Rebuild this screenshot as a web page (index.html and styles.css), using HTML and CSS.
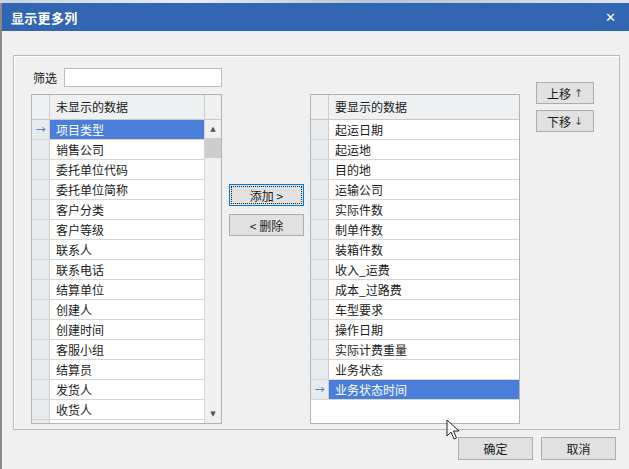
FILE: index.html
```html
<!DOCTYPE html>
<html lang="zh">
<head>
<meta charset="utf-8">
<link rel="stylesheet" href="styles.css">
</head>
<body>
<div class="screen">
  <div class="topstrip"></div>
  <div class="dialog">
    <div class="titlebar">
      <span class="title">显示更多列</span>
      <span class="close">✕</span>
    </div>
    <div class="body">
      <div class="panel">
        <div class="leftcol">
          <div class="filter">
            <span class="filter-label">筛选</span>
            <span class="filter-input"></span>
          </div>
          <div class="grid grid-left">
            <div class="ghead">
              <span class="ind"></span>
              <span class="gtitle">未显示的数据</span>
              <span class="sbhead"></span>
            </div>
            <div class="gbody">
              <div class="rows">
                <div class="row sel"><span class="ind">→</span><span class="cell">项目类型</span></div>
                <div class="row"><span class="ind"></span><span class="cell">销售公司</span></div>
                <div class="row"><span class="ind"></span><span class="cell">委托单位代码</span></div>
                <div class="row"><span class="ind"></span><span class="cell">委托单位简称</span></div>
                <div class="row"><span class="ind"></span><span class="cell">客户分类</span></div>
                <div class="row"><span class="ind"></span><span class="cell">客户等级</span></div>
                <div class="row"><span class="ind"></span><span class="cell">联系人</span></div>
                <div class="row"><span class="ind"></span><span class="cell">联系电话</span></div>
                <div class="row"><span class="ind"></span><span class="cell">结算单位</span></div>
                <div class="row"><span class="ind"></span><span class="cell">创建人</span></div>
                <div class="row"><span class="ind"></span><span class="cell">创建时间</span></div>
                <div class="row"><span class="ind"></span><span class="cell">客服小组</span></div>
                <div class="row"><span class="ind"></span><span class="cell">结算员</span></div>
                <div class="row"><span class="ind"></span><span class="cell">发货人</span></div>
                <div class="row"><span class="ind"></span><span class="cell">收货人</span></div>
                <div class="row"><span class="ind"></span><span class="cell"></span></div>
              </div>
              <div class="scrollbar">
                <span class="sb-up">▲</span>
                <span class="sb-thumb"></span>
                <span class="sb-track"></span>
                <span class="sb-down">▼</span>
              </div>
            </div>
          </div>
        </div>
        <div class="midcol">
          <div class="btn btn-mid focus"><span class="focusring">添加 &gt;</span></div>
          <div class="btn btn-mid">&lt; 删除</div>
        </div>
        <div class="grid grid-right">
          <div class="ghead">
            <span class="ind"></span>
            <span class="gtitle">要显示的数据</span>
          </div>
          <div class="rows">
            <div class="row"><span class="ind"></span><span class="cell">起运日期</span></div>
            <div class="row"><span class="ind"></span><span class="cell">起运地</span></div>
            <div class="row"><span class="ind"></span><span class="cell">目的地</span></div>
            <div class="row"><span class="ind"></span><span class="cell">运输公司</span></div>
            <div class="row"><span class="ind"></span><span class="cell">实际件数</span></div>
            <div class="row"><span class="ind"></span><span class="cell">制单件数</span></div>
            <div class="row"><span class="ind"></span><span class="cell">装箱件数</span></div>
            <div class="row"><span class="ind"></span><span class="cell">收入_运费</span></div>
            <div class="row"><span class="ind"></span><span class="cell">成本_过路费</span></div>
            <div class="row"><span class="ind"></span><span class="cell">车型要求</span></div>
            <div class="row"><span class="ind"></span><span class="cell">操作日期</span></div>
            <div class="row"><span class="ind"></span><span class="cell">实际计费重量</span></div>
            <div class="row"><span class="ind"></span><span class="cell">业务状态</span></div>
            <div class="row sel last"><span class="ind">→</span><span class="cell">业务状态时间</span></div>
          </div>
        </div>
        <div class="rightcol">
          <div class="btn btn-move">上移 <span class="arr">↑</span></div>
          <div class="btn btn-move">下移 <span class="arr">↓</span></div>
        </div>
      </div>
      <div class="footer">
        <div class="btn btn-foot">确定</div>
        <div class="btn btn-foot">取消</div>
      </div>
    </div>
  </div>
  <svg class="cursor" width="14" height="22" viewBox="0 0 14 22">
    <path d="M1 1 L1 17 L5 13 L8 20 L10.5 19 L7.5 12 L13 12 Z" fill="#fff" stroke="#222" stroke-width="1" stroke-linejoin="round"/>
  </svg>
</div>
</body>
</html>
```
FILE: styles.css
```css
* { box-sizing: border-box; }
html, body { margin: 0; padding: 0; }
body {
  width: 629px;
  height: 469px;
  overflow: hidden;
  background: #f0f0f0;
  font-family: "Noto Sans CJK SC", "Noto Sans", sans-serif;
  font-size: 12px;
  color: #1a1a1a;
}
.screen {
  position: relative;
  width: 629px;
  height: 469px;
  background: #8a8a8a;
}
.topstrip {
  height: 3px;
  background: linear-gradient(90deg, #c8d2e0, #e8ecf2 30%, #b8c4d8 60%, #dfe4ec);
}
.dialog {
  margin-left: 2px;
  height: 466px;
  background: #f0f0f0;
  display: flex;
  flex-direction: column;
}
.titlebar {
  height: 28px;
  background: #3265b2;
  display: flex;
  align-items: center;
  justify-content: space-between;
  padding: 0 13px 0 9px;
  color: #fff;
}
.title {
  font-weight: bold;
  font-size: 13px;
  letter-spacing: 0.3px;
}
.close {
  font-size: 13px;
  font-family: "DejaVu Sans", sans-serif;
}
.body {
  flex: 1;
  padding: 24px 9px 0 11px;
  display: flex;
  flex-direction: column;
}
.panel {
  height: 375px;
  border: 1px solid #b9b9b9;
  box-shadow: 1px 1px 0 #fff inset;
  display: flex;
  padding: 12px 0 0 17px;
}
.leftcol {
  width: 191px;
  display: flex;
  flex-direction: column;
}
.filter {
  display: flex;
  align-items: center;
  height: 19px;
  margin-bottom: 7px;
}
.filter-label {
  width: 33px;
  padding-left: 2px;
  line-height: 19px;
}
.filter-input {
  width: 158px;
  height: 19px;
  background: #fff;
  border: 1px solid #bcbcbc;
}
.grid {
  height: 330px;
  background: #fff;
  border: 1px solid #b4b4b4;
  display: flex;
  flex-direction: column;
}
.ghead {
  height: 25px;
  display: flex;
  background: #eef0f2;
  border-bottom: 1px solid #c9c9c9;
  flex: none;
}
.ind {
  width: 18px;
  flex: none;
  background: #e8ebee;
  border-right: 1px solid #cdcdcd;
  color: #5a7fc4;
  font-size: 12px;
  text-align: center;
  line-height: 19px;
  font-family: "DejaVu Sans", sans-serif;
}
.ghead .ind { background: #eef0f2; }
.gtitle {
  flex: 1;
  padding-left: 6px;
  line-height: 24px;
  border-right: 1px solid #cdcdcd;
}
.grid-right .gtitle { border-right: none; }
.sbhead {
  width: 16px;
  flex: none;
}
.gbody {
  flex: 1;
  display: flex;
  overflow: hidden;
}
.rows {
  flex: 1;
  display: flex;
  flex-direction: column;
  overflow: hidden;
}
.row {
  height: 20px;
  flex: none;
  display: flex;
  border-bottom: 1px solid #d6d6d6;
}
.cell {
  flex: 1;
  padding-left: 6px;
  line-height: 19px;
  white-space: nowrap;
}
.row.sel .cell {
  background: #4a7ed9;
  color: #fff;
}
.grid-left .rows { border-right: 1px solid #d6d6d6; }
.scrollbar {
  width: 16px;
  flex: none;
  display: flex;
  flex-direction: column;
  background: #f0f0f0;
}
.sb-up, .sb-down {
  height: 18px;
  flex: none;
  font-size: 7px;
  color: #555;
  text-align: center;
  line-height: 18px;
  font-family: "DejaVu Sans", sans-serif;
}
.sb-thumb {
  height: 20px;
  flex: none;
  background: #cdcdcd;
}
.sb-track { flex: 1; }
.midcol {
  width: 75px;
  margin: 0 6px 0 7px;
  padding-top: 116px;
  display: flex;
  flex-direction: column;
  gap: 8px;
}
.btn {
  background: #e1e1e1;
  border: 1px solid #adadad;
  display: flex;
  align-items: center;
  justify-content: center;
  color: #1a1a1a;
  white-space: nowrap;
}
.btn-mid { height: 22px; }
.btn-mid.focus {
  border-color: #0078d7;
  padding: 1px;
}
.focusring {
  width: 100%;
  height: 100%;
  border: 1px dotted #222;
  display: flex;
  align-items: center;
  justify-content: center;
}
.grid-right {
  width: 210px;
  margin-top: 26px;
}
.rightcol {
  margin-left: 16px;
  padding-top: 14px;
  display: flex;
  flex-direction: column;
  gap: 6px;
}
.btn-move {
  width: 58px;
  height: 22px;
}
.arr {
  margin-left: 3px;
  color: #555;
  font-family: "DejaVu Sans", sans-serif;
  font-size: 11px;
}
.footer {
  display: flex;
  justify-content: flex-end;
  gap: 8px;
  padding-top: 7px;
  padding-right: 4px;
}
.btn-foot {
  width: 75px;
  height: 23px;
}
.cursor {
  position: absolute;
  left: 446px;
  top: 419px;
}
```
